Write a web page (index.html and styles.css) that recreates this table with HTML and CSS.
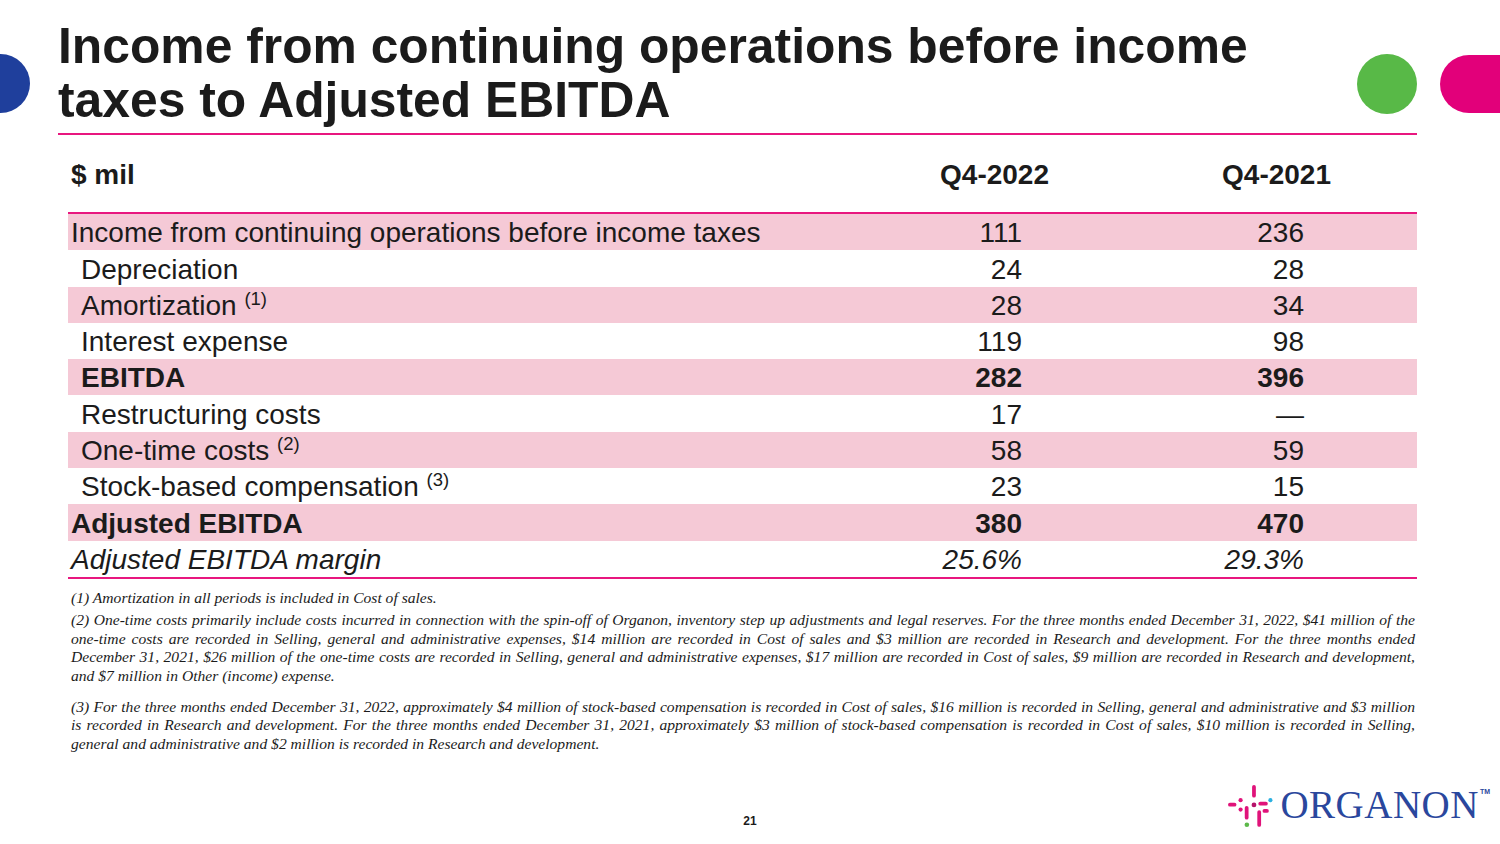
FILE: index.html
```html
<!DOCTYPE html>
<html lang="en">
<head>
<meta charset="utf-8">
<title>Income from continuing operations before income taxes to Adjusted EBITDA</title>
<link rel="stylesheet" href="styles.css">
</head>
<body>
<div class="slide">
  <header class="top">
    <div class="blue"></div>
    <h1 class="title">Income from continuing operations before income<br>taxes to Adjusted EBITDA</h1>
    <div class="green"></div>
    <div class="pill"></div>
  </header>
  <div class="rule"></div>

  <div class="table">
    <div class="row head">
      <div class="lbl">$ mil</div>
      <div class="hd">Q4-2022</div>
      <div class="hd">Q4-2021</div>
    </div>
    <div class="row pk">
      <div class="lbl">Income from continuing operations before income taxes</div>
      <div class="num">111</div>
      <div class="num">236</div>
    </div>
    <div class="row">
      <div class="lbl ind">Depreciation</div>
      <div class="num">24</div>
      <div class="num">28</div>
    </div>
    <div class="row pk">
      <div class="lbl ind">Amortization <span class="sup">(1)</span></div>
      <div class="num">28</div>
      <div class="num">34</div>
    </div>
    <div class="row">
      <div class="lbl ind">Interest expense</div>
      <div class="num">119</div>
      <div class="num">98</div>
    </div>
    <div class="row pk b">
      <div class="lbl ind">EBITDA</div>
      <div class="num">282</div>
      <div class="num">396</div>
    </div>
    <div class="row">
      <div class="lbl ind">Restructuring costs</div>
      <div class="num">17</div>
      <div class="num">—</div>
    </div>
    <div class="row pk">
      <div class="lbl ind">One-time costs <span class="sup">(2)</span></div>
      <div class="num">58</div>
      <div class="num">59</div>
    </div>
    <div class="row">
      <div class="lbl ind">Stock-based compensation <span class="sup">(3)</span></div>
      <div class="num">23</div>
      <div class="num">15</div>
    </div>
    <div class="row pk b">
      <div class="lbl">Adjusted EBITDA</div>
      <div class="num">380</div>
      <div class="num">470</div>
    </div>
    <div class="row i last">
      <div class="lbl">Adjusted EBITDA margin</div>
      <div class="num">25.6%</div>
      <div class="num">29.3%</div>
    </div>
  </div>

  <div class="notes">
    <p class="n1"><span class="ln">(1) Amortization in all periods is included in Cost of sales.</span></p>
    <p class="n2">
      <span class="ln j">(2) One-time costs primarily include costs incurred in connection with the spin-off of Organon, inventory step up adjustments and legal reserves. For the three months ended December 31, 2022, $41 million of the</span>
      <span class="ln j">one-time costs are recorded in Selling, general and administrative expenses, $14 million are recorded in Cost of sales and $3 million are recorded in Research and development. For the three months ended</span>
      <span class="ln j">December 31, 2021, $26 million of the one-time costs are recorded in Selling, general and administrative expenses, $17 million are recorded in Cost of sales, $9 million are recorded in Research and development,</span>
      <span class="ln">and $7 million in Other (income) expense.</span>
    </p>
    <p class="n3">
      <span class="ln j">(3) For the three months ended December 31, 2022, approximately $4 million of stock-based compensation is recorded in Cost of sales, $16 million is recorded in Selling, general and administrative and $3 million</span>
      <span class="ln j">is recorded in Research and development. For the three months ended December 31, 2021, approximately $3 million of stock-based compensation is recorded in Cost of sales, $10 million is recorded in Selling,</span>
      <span class="ln">general and administrative and $2 million is recorded in Research and development.</span>
    </p>
  </div>

  <footer class="foot">
    <div class="spacer"></div>
    <div class="pagenum">21</div>
    <div class="logo">
      <svg class="mark" width="46" height="46" viewBox="0 0 44 44" aria-hidden="true">
        <rect x="1" y="18" width="8" height="3.6" rx="1.8" fill="#e0137a"/>
        <circle cx="13" cy="15.5" r="2" fill="#e0137a"/>
        <circle cx="13" cy="24.5" r="2" fill="#e0137a"/>
        <rect x="17" y="21" width="3.6" height="13" rx="1.8" fill="#e0137a"/>
        <rect x="24" y="1" width="3.6" height="12" rx="1.8" fill="#e0137a"/>
        <circle cx="25.8" cy="20" r="2.3" fill="#b5136a"/>
        <rect x="30" y="17" width="9" height="3.6" rx="1.8" fill="#e0137a"/>
        <circle cx="41.5" cy="15.5" r="2" fill="#2bb0e0"/>
        <rect x="29" y="25" width="3.6" height="16" rx="1.8" fill="#e0137a"/>
        <rect x="34" y="24" width="6" height="3.6" rx="1.8" fill="#e0137a"/>
        <circle cx="19" cy="39" r="2.2" fill="#5cb94a"/>
      </svg>
      <span class="word">ORGANON</span><span class="tm">TM</span>
    </div>
  </footer>
</div>
</body>
</html>
```

FILE: styles.css
```css
html, body {
  margin: 0;
  padding: 0;
  background: #ffffff;
}

.slide {
  width: 1500px;
  height: 844px;
  overflow: hidden;
  display: flex;
  flex-direction: column;
  font-family: "Liberation Sans", Arial, sans-serif;
  color: #1b1b1b;
}

/* ---------- header ---------- */
.top {
  display: flex;
  align-items: flex-start;
  height: 133px;
}

.blue {
  width: 30px;
  height: 59px;
  margin-top: 54px;
  background: #1f3f9c;
  border-radius: 0 30px 30px 0;
  flex: none;
}

.title {
  margin: 19px 0 0 28px;
  font-size: 49.8px;
  line-height: 54px;
  font-weight: bold;
  white-space: nowrap;
  color: #1b1b1b;
}

.green {
  width: 60px;
  height: 60px;
  margin: 54px 23px 0 auto;
  border-radius: 50%;
  background: #58b947;
  flex: none;
}

.pill {
  width: 60px;
  height: 58px;
  margin-top: 55px;
  border-radius: 29px 0 0 29px;
  background: #e2007a;
  flex: none;
}

.rule {
  margin-left: 58px;
  width: 1359px;
  height: 2px;
  background: #e8177f;
}

/* ---------- table ---------- */
.table {
  margin-left: 68px;
  width: 1349px;
}

.row {
  display: grid;
  grid-template-columns: 699px 282px 282px 86px;
  height: 36.3px;
  box-sizing: border-box;
  padding-top: 1.3px;
  line-height: 35px;
  font-size: 28px;
  white-space: nowrap;
}

.row.head {
  height: 79px;
  padding-top: 2px;
  line-height: 75px;
  font-weight: bold;
  border-bottom: 2px solid #e8177f;
}

.row.pk {
  background: #f5c9d6;
}

.row.b {
  font-weight: bold;
}

.row.i {
  font-style: italic;
}

.row.last {
  height: 38.3px;
  border-bottom: 2px solid #e8177f;
}

.lbl {
  padding-left: 3px;
}

.lbl.ind {
  padding-left: 13px;
}

.hd {
  text-align: right;
}

.num {
  text-align: right;
  padding-right: 27px;
}

.sup {
  font-size: 18.5px;
  line-height: 1;
  vertical-align: 10px;
}

/* ---------- footnotes ---------- */
.notes {
  margin: 10.5px 0 0 71px;
  width: 1344px;
  font-family: "Liberation Serif", "Times New Roman", serif;
  font-style: italic;
  font-size: 15.6px;
  line-height: 18.5px;
  color: #1b1b1b;
}

.notes p {
  margin: 0;
}

.notes .n2 {
  margin-top: 3.5px;
}

.notes .n3 {
  margin-top: 12.5px;
}

.ln {
  display: block;
  white-space: nowrap;
}

.ln.j {
  text-align: justify;
  text-align-last: justify;
}

/* ---------- footer ---------- */
.foot {
  margin-top: auto;
  height: 64px;
  display: grid;
  grid-template-columns: 1fr auto 1fr;
  align-items: start;
}

.pagenum {
  margin-top: 34px;
  font-size: 12px;
  line-height: 14px;
  font-weight: bold;
  color: #1b1b1b;
}

.logo {
  justify-self: end;
  margin-right: 10px;
  display: flex;
  align-items: flex-start;
}

.mark {
  margin-top: 4px;
  flex: none;
}

.word {
  margin: 4.5px 0 0 7px;
  font-family: "Liberation Serif", "Times New Roman", serif;
  font-size: 39px;
  line-height: 40px;
  letter-spacing: 0.5px;
  color: #2a479d;
}

.tm {
  margin: 8px 0 0 1px;
  font-size: 7px;
  line-height: 8px;
  font-weight: bold;
  color: #2a479d;
}
```
